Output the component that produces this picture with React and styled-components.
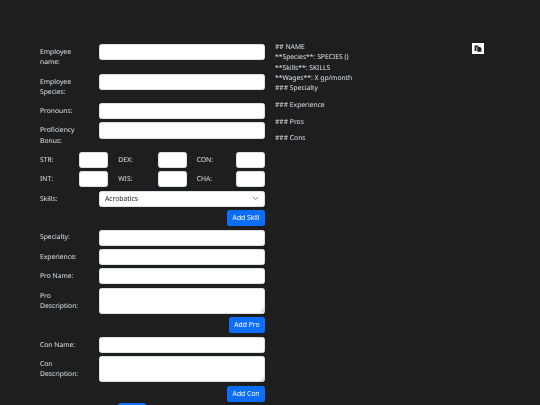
import React from 'react'
import styled, { createGlobalStyle } from 'styled-components'

const GlobalStyle = createGlobalStyle`
  html, body {
    margin: 0;
    height: 405px;
    overflow: hidden;
    background: #1e1e1e;
  }
  * {
    box-sizing: border-box;
  }
`

const chevron = "url(\"data:image/svg+xml,%3csvg xmlns='http://www.w3.org/2000/svg' viewBox='0 0 16 16'%3e%3cpath fill='none' stroke='%23343a40' stroke-linecap='round' stroke-linejoin='round' stroke-width='2' d='m2 5 6 6 6-6'/%3e%3c/svg%3e\")"

function Field({ label, area }) {
  return (
    <Row>
      <Label>{label}</Label>
      {area ? (
        <AreaWrap>
          <TextArea />
          <Grip viewBox="0 0 6 6">
            <path d="M1 5.5 5.5 1M3.2 5.5 5.5 3.2" />
          </Grip>
        </AreaWrap>
      ) : (
        <TextInput />
      )}
    </Row>
  )
}

function Stat({ label }) {
  return (
    <StatBox>
      <StatLabel>{label}</StatLabel>
      <StatInput />
    </StatBox>
  )
}

function App() {
  return (
    <Page>
      <GlobalStyle />
      <Form>
        <Field label="Employee name:" />
        <Field label="Employee Species:" />
        <Field label="Pronouns:" />
        <Field label="Proficiency Bonus:" />
        <StatGrid>
          <Stat label="STR:" />
          <Stat label="DEX:" />
          <Stat label="CON:" />
          <Stat label="INT:" />
          <Stat label="WIS:" />
          <Stat label="CHA:" />
        </StatGrid>
        <Row>
          <Label>Skills:</Label>
          <Select defaultValue="Acrobatics">
            <option>Acrobatics</option>
          </Select>
        </Row>
        <Actions>
          <Button>Add Skill</Button>
        </Actions>
        <Field label="Specialty:" />
        <Field label="Experience:" />
        <Field label="Pro Name:" />
        <Field label="Pro Description:" area />
        <Actions>
          <Button>Add Pro</Button>
        </Actions>
        <Field label="Con Name:" />
        <Field label="Con Description:" area />
        <Actions>
          <Button>Add Con</Button>
        </Actions>
        <SubmitRow>
          <span />
          <div>
            <SubmitButton>Submit</SubmitButton>
          </div>
        </SubmitRow>
      </Form>
      <Preview>
        <Paragraph>
          ## NAME
          <br />
          **Species**: SPECIES ()
          <br />
          **Skills**: SKILLS
          <br />
          **Wages**: X gp/month
          <br />
          ### Specialty
        </Paragraph>
        <Paragraph>### Experience</Paragraph>
        <Paragraph>### Pros</Paragraph>
        <Paragraph>### Cons</Paragraph>
      </Preview>
      <CopyColumn>
        <CopyButton aria-label="Copy">
          <svg width="8" height="7" viewBox="0 0 8 7">
            <path d="M0.6 0.5h3.6l0.6 0.6v0.6h-1.6l-0.8 0.8v3.4h-1.8z" fill="#1e1e1e" />
            <path d="M3.3 2.1h2.9l1.2 1.2v3.4h-4.1z" fill="#1e1e1e" />
          </svg>
        </CopyButton>
      </CopyColumn>
    </Page>
  )
}

export default App

const Page = styled.div`
  display: grid;
  grid-template-columns: 225px 187px 12px;
  column-gap: 10px;
  align-items: start;
  padding: 42.3px 0 0 40px;
  font-family: "Noto Sans", sans-serif;
  font-size: 6.75px;
  line-height: 1.5;
  color: #dee2e6;
  text-rendering: geometricPrecision;
  will-change: transform;
`

const Form = styled.form`
  padding-top: 1.8px;
  display: flex;
  flex-direction: column;
  gap: 3.375px;
`

const Row = styled.div`
  display: grid;
  grid-template-columns: 59px 1fr;
  align-items: start;
`

const Label = styled.label`
  padding: 2.95px 14px 2.95px 0;
`

const TextInput = styled.input`
  display: block;
  width: 100%;
  height: 16.03px;
  padding: 0 5px;
  background: #fff;
  border: 0.42px solid #dee2e6;
  border-radius: 2.5px;
  font: inherit;
  outline: none;
`

const AreaWrap = styled.div`
  position: relative;
`

const TextArea = styled.textarea`
  display: block;
  width: 100%;
  height: 26.16px;
  padding: 0 5px;
  background: #fff;
  border: 0.42px solid #dee2e6;
  border-radius: 2.5px;
  font: inherit;
  outline: none;
  resize: none;
`

const Grip = styled.svg`
  position: absolute;
  right: 0.5px;
  bottom: 0.5px;
  width: 6px;
  height: 6px;
  fill: none;
  stroke: #8a8a8a;
  stroke-width: 0.5;
`

const Select = styled.select`
  display: block;
  width: 100%;
  height: 16.03px;
  padding: 0 16px 0 5px;
  appearance: none;
  background: #fff ${chevron} no-repeat right 5px center / 6.75px 5px;
  border: 0.42px solid #dee2e6;
  border-radius: 2.5px;
  color: #212529;
  font: inherit;
  outline: none;
`

const StatGrid = styled.div`
  display: grid;
  grid-template-columns: repeat(3, 1fr);
  column-gap: 10px;
  row-gap: 3.375px;
`

const SubmitRow = styled(StatGrid)`
  margin-top: -1.7px;
`

const StatBox = styled.div`
  display: flex;
  justify-content: space-between;
  align-items: center;
`

const StatLabel = styled.label``

const StatInput = styled(TextInput)`
  width: 29px;
`

const Actions = styled.div`
  display: flex;
  justify-content: flex-end;
`

const Button = styled.button`
  height: 16.03px;
  padding: 0 5.5px;
  background: #0d6efd;
  border: none;
  border-radius: 2.5px;
  color: #fff;
  font: inherit;
`

const SubmitButton = styled(Button)`
  width: 28px;
  padding: 0;
`

const Preview = styled.div`
  min-width: 0;
`

const Paragraph = styled.p`
  margin: 0 0 6.75px;
`

const CopyColumn = styled.div`
  padding-top: 0.9px;
`

const CopyButton = styled.button`
  display: flex;
  align-items: center;
  justify-content: center;
  width: 12px;
  height: 11px;
  padding: 0;
  background: #fff;
  border: none;
`
